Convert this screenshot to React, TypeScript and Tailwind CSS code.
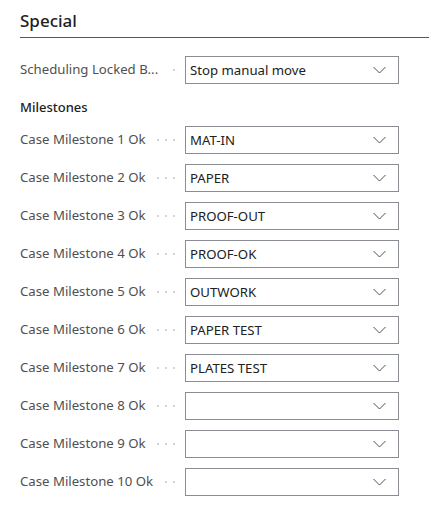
type Field = { label: string; value: string; dots: number };

const milestones: Field[] = [
    { label: "Case Milestone 1 Ok", value: "MAT-IN", dots: 3 },
    { label: "Case Milestone 2 Ok", value: "PAPER", dots: 3 },
    { label: "Case Milestone 3 Ok", value: "PROOF-OUT", dots: 3 },
    { label: "Case Milestone 4 Ok", value: "PROOF-OK", dots: 3 },
    { label: "Case Milestone 5 Ok", value: "OUTWORK", dots: 3 },
    { label: "Case Milestone 6 Ok", value: "PAPER TEST", dots: 3 },
    { label: "Case Milestone 7 Ok", value: "PLATES TEST", dots: 3 },
    { label: "Case Milestone 8 Ok", value: "", dots: 3 },
    { label: "Case Milestone 9 Ok", value: "", dots: 3 },
    { label: "Case Milestone 10 Ok", value: "", dots: 2 },
];

const Chevron = () => (
    <svg width="13" height="8" viewBox="0 0 13 8" fill="none" className="shrink-0">
        <polyline points="0.5,1 6.5,7 12.5,1" stroke="#505050" strokeWidth="1" />
    </svg>
);

const FieldRow = ({ label, value, dots }: Field) => (
    <div className="flex items-center h-[28px]">
        <div className="flex items-center w-[165px] h-full">
            <span className="text-[13.2px] text-[#505050] whitespace-nowrap">{label}</span>
            <div className="flex-1 flex justify-end items-center gap-[6px] pr-[10px]">
                {Array.from({ length: dots }).map((_, i) => (
                    <span key={i} className="w-[2px] h-[2px] bg-[#d4d4d4]"></span>
                ))}
            </div>
        </div>
        <div className="flex items-center justify-between w-[214px] h-full border border-[#8a8d93] bg-white pl-[4px] pr-[12px]">
            <span className="text-[13.2px] text-[#212121] whitespace-nowrap pt-[1px]">{value}</span>
            <Chevron />
        </div>
    </div>
);

export default function App() {
    return (
        <div className="w-[429px] h-[511px] bg-white pl-5 pt-[9px] font-['Segoe_UI','Noto_Sans',sans-serif]">
            <h2 className="text-[17px] font-medium text-[#212121] leading-[24px] pb-[4px] border-b border-[#4f5a69]">
                Special
            </h2>
            <div className="mt-[18px]">
                <FieldRow label="Scheduling Locked B..." value="Stop manual move" dots={1} />
            </div>
            <h3 className="text-[13px] font-medium text-[#212121] mt-[13px] leading-[20px]">Milestones</h3>
            <div className="flex flex-col gap-[10px] mt-[9px]">
                {milestones.map((m) => (
                    <FieldRow key={m.label} {...m} />
                ))}
            </div>
        </div>
    );
}
